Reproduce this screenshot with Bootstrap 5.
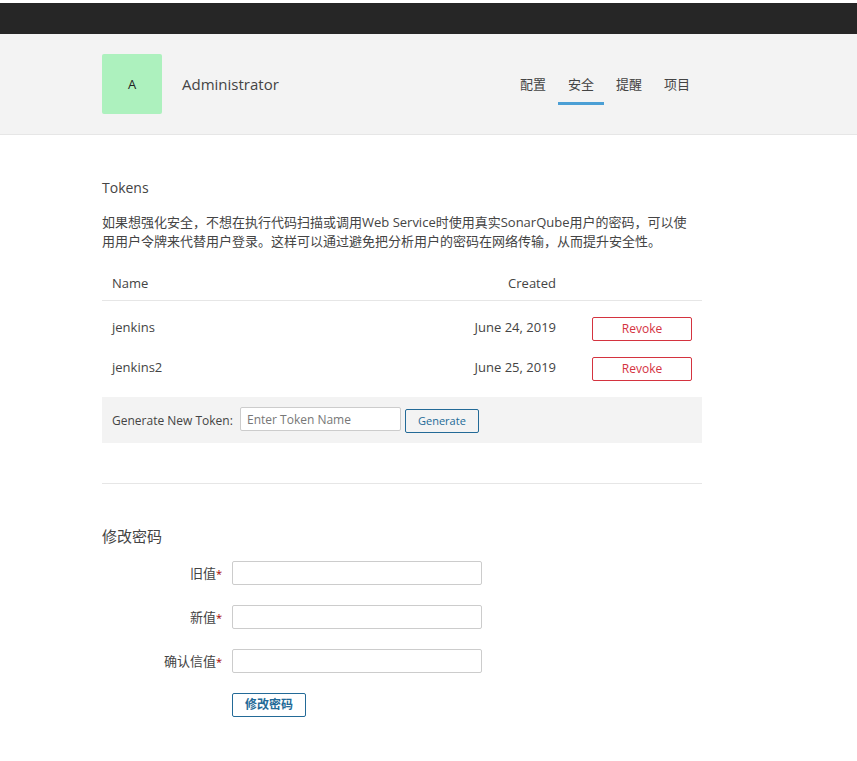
<!DOCTYPE html>
<html lang="zh-CN">
<head>
<meta charset="utf-8">
<meta name="viewport" content="width=device-width, initial-scale=1">
<title>Administrator - 安全</title>
<link rel="stylesheet" href="https://cdn.jsdelivr.net/npm/bootstrap@5.3.0/dist/css/bootstrap.min.css">
<style>
body{font:13px/19px "Open Sans","Noto Sans CJK SC",sans-serif;color:#444;background:#fff}
.top-strip{height:34px;background:#262626;border-top:3px solid #fff}
.account-header{background:#f3f3f3;border-bottom:1px solid #e6e6e6;min-height:101px;padding:20px 0}
.account-width{max-width:702px;padding-left:102px}
.avatar{width:60px;height:60px;border-radius:2px;background:#adf1be;color:#222;font-size:13px}
.user-name{font-size:15px;font-weight:400;line-height:24px;margin:0 0 0 20px}
.tab-list{gap:2px;padding:8px 2px 0 0}
.tab-list .nav-link{padding:12px 10px 8px;line-height:20px;color:#444;border-bottom:3px solid transparent;transition:none}
.tab-list .nav-link.active{border-color:#4b9fd5}
.section-title{font-size:15px;line-height:24px;font-weight:400;margin:0 0 13px}
.tokens{padding-top:41px}
.tokens .section-title{font-size:14px}
.intro{padding-right:10px;margin-bottom:16px}
.token-table{margin:0}
.token-table th{font-weight:400;padding:8px 10px;line-height:17px;border-bottom:1px solid #e6e6e6}
.token-table td{padding:8px 10px;line-height:20px;vertical-align:top}
.token-table tbody::before{content:"";display:table-row;height:8px}
.token-table .created{width:140px;text-align:right}
.token-table .action{width:136px;text-align:right}
.btn-line{--bs-btn-padding-x:12px;--bs-btn-padding-y:0px;--bs-btn-font-size:12px;--bs-btn-border-radius:2px;--bs-btn-line-height:22px;--bs-btn-color:#236a97;--bs-btn-border-color:#236a97;--bs-btn-hover-color:#fff;--bs-btn-hover-bg:#236a97;height:24px}
.btn-revoke{--bs-btn-color:#d4333f;--bs-btn-border-color:#d4333f;--bs-btn-hover-bg:#d4333f;width:100px}
.field{height:24px;min-height:24px;padding:2px 6px 0;font-size:12px;line-height:20px;color:#444;border:1px solid #ccc;border-radius:2px}
.field::placeholder{color:#777}
.generate-bar{background:#f3f3f3;padding:10px;margin-top:8px;gap:4px;min-height:46px}
.generate-bar label{min-width:124px;font-size:12px;line-height:24px;padding-top:2px}
.generate-bar .field{width:161px}
.generate-bar .btn{--bs-btn-font-size:11px;margin-top:2px}
.divider{margin:40px 0;border-top:1px solid #e6e6e6;opacity:1}
.password-form{display:grid;grid-template-columns:120px 250px;grid-auto-rows:24px;gap:20px 10px}
.password-form label{text-align:right;line-height:24px}
.required-mark{color:#a40000;font-size:11px}
.password-form .btn{grid-column:2;justify-self:start;font-weight:700}
</style>
<script src="https://cdn.jsdelivr.net/npm/bootstrap@5.3.0/dist/js/bootstrap.bundle.min.js"></script>
</head>
<body>
<div class="top-strip"></div>
<header class="account-header">
  <div class="account-width d-flex align-items-center">
    <div class="avatar d-flex align-items-center justify-content-center">A</div>
    <h1 class="user-name">Administrator</h1>
    <nav class="nav tab-list ms-auto align-self-start" aria-label="账户">
      <a class="nav-link" href="#">配置</a>
      <a class="nav-link active" aria-current="page" href="#">安全</a>
      <a class="nav-link" href="#">提醒</a>
      <a class="nav-link" href="#">项目</a>
    </nav>
  </div>
</header>
<main class="account-width">
  <section class="tokens">
    <h2 class="section-title">Tokens</h2>
    <p class="intro">如果想强化安全，不想在执行代码扫描或调用Web Service时使用真实SonarQube用户的密码，可以使用用户令牌来代替用户登录。这样可以通过避免把分析用户的密码在网络传输，从而提升安全性。</p>
    <table class="token-table w-100">
      <thead><tr><th scope="col">Name</th><th scope="col" class="created">Created</th><th class="action"></th></tr></thead>
      <tbody>
        <tr><td>jenkins</td><td class="created">June 24, 2019</td><td class="action"><button type="button" class="btn btn-line btn-revoke d-block ms-auto">Revoke</button></td></tr>
        <tr><td>jenkins2</td><td class="created">June 25, 2019</td><td class="action"><button type="button" class="btn btn-line btn-revoke d-block ms-auto">Revoke</button></td></tr>
      </tbody>
    </table>
    <form class="generate-bar d-flex align-items-start">
      <label for="token-name">Generate New Token:</label>
      <input id="token-name" class="field" type="text" placeholder="Enter Token Name">
      <button type="button" class="btn btn-line">Generate</button>
    </form>
  </section>
  <hr class="divider">
  <section>
    <h2 class="section-title">修改密码</h2>
    <form class="password-form">
      <label for="old-password">旧值<span class="required-mark">*</span></label>
      <input id="old-password" class="field" type="password">
      <label for="new-password">新值<span class="required-mark">*</span></label>
      <input id="new-password" class="field" type="password">
      <label for="confirm-password">确认信值<span class="required-mark">*</span></label>
      <input id="confirm-password" class="field" type="password">
      <button type="button" class="btn btn-line">修改密码</button>
    </form>
  </section>
</main>
</body>
</html>
